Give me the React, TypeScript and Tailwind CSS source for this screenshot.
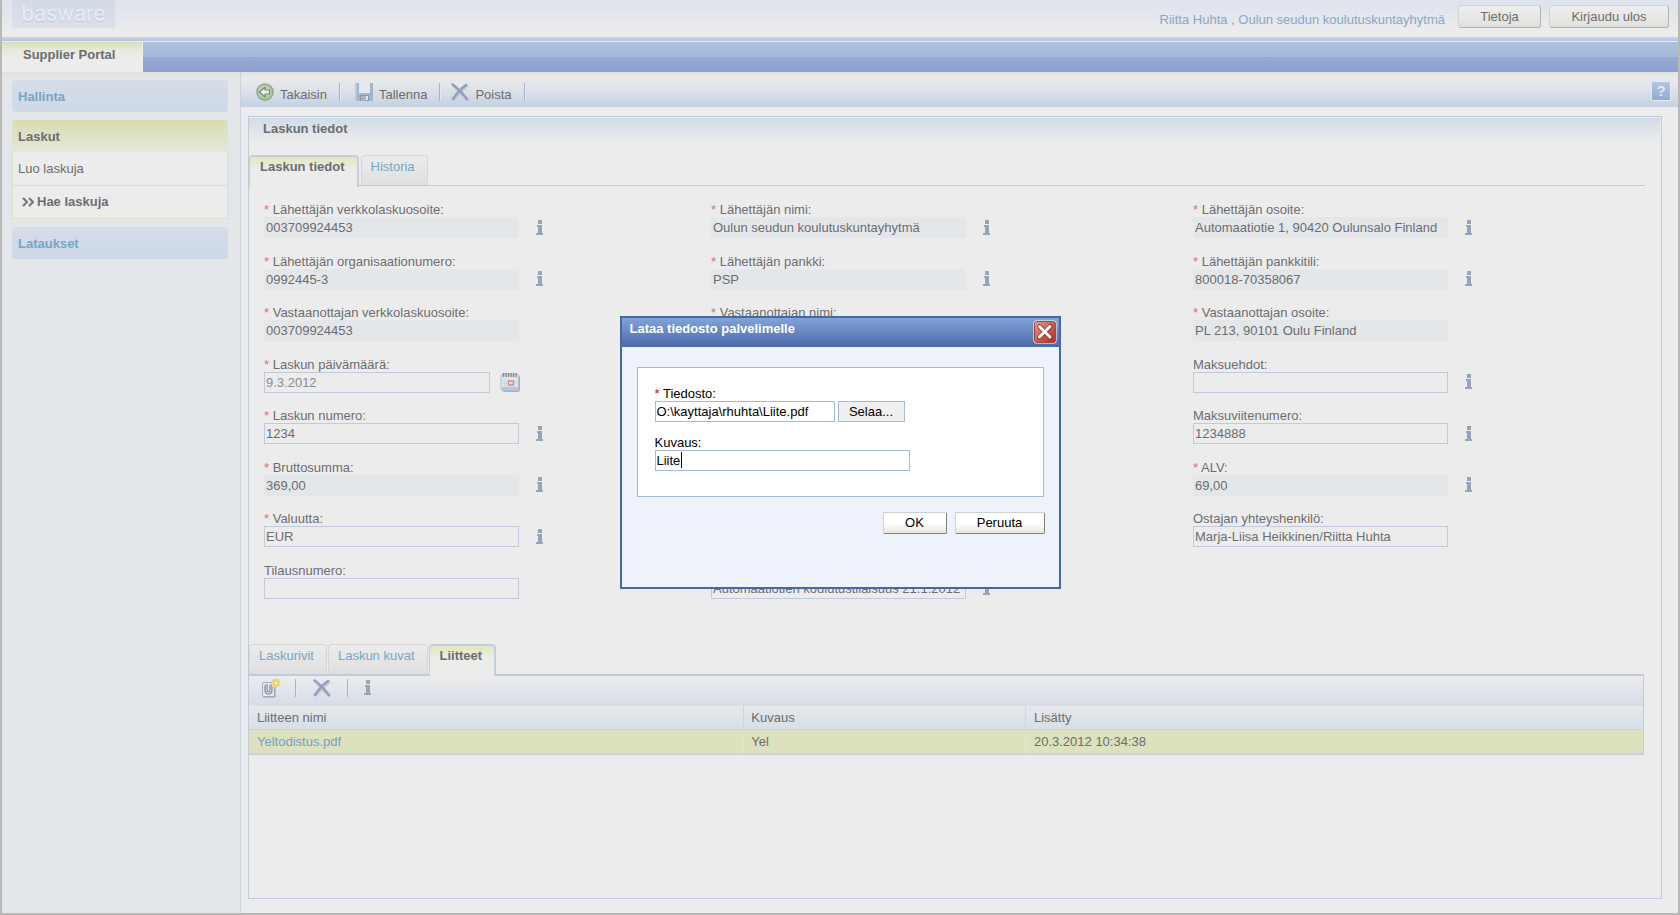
import { useState } from "react"
import { clsx } from "clsx"

interface Field {
  id: string
  label: string
  value: string
  required?: boolean
  readOnly?: boolean
  info?: boolean
  date?: boolean
  cell: string
}

const FIELDS: Field[] = [
  { id: "senderAddress", label: "Lähettäjän verkkolaskuosoite:", value: "003709924453", required: true, readOnly: true, info: true, cell: "col-start-1 row-start-1" },
  { id: "senderOrg", label: "Lähettäjän organisaationumero:", value: "0992445-3", required: true, readOnly: true, info: true, cell: "col-start-1 row-start-2" },
  { id: "receiverAddress", label: "Vastaanottajan verkkolaskuosoite:", value: "003709924453", required: true, readOnly: true, cell: "col-start-1 row-start-3" },
  { id: "invoiceDate", label: "Laskun päivämäärä:", value: "9.3.2012", required: true, date: true, cell: "col-start-1 row-start-4" },
  { id: "invoiceNumber", label: "Laskun numero:", value: "1234", required: true, info: true, cell: "col-start-1 row-start-5" },
  { id: "gross", label: "Bruttosumma:", value: "369,00", required: true, readOnly: true, info: true, cell: "col-start-1 row-start-6" },
  { id: "currency", label: "Valuutta:", value: "EUR", required: true, info: true, cell: "col-start-1 row-start-7" },
  { id: "orderNumber", label: "Tilausnumero:", value: "", cell: "col-start-1 row-start-8" },
  { id: "senderName", label: "Lähettäjän nimi:", value: "Oulun seudun koulutuskuntayhytmä", required: true, readOnly: true, info: true, cell: "col-start-2 row-start-1" },
  { id: "senderBank", label: "Lähettäjän pankki:", value: "PSP", required: true, readOnly: true, info: true, cell: "col-start-2 row-start-2" },
  { id: "receiverName", label: "Vastaanottajan nimi:", value: "", required: true, readOnly: true, cell: "col-start-2 row-start-3" },
  { id: "description", label: "", value: "Automaatiotien koulutustilaisuus 21.1.2012", info: true, cell: "col-start-2 row-start-8" },
  { id: "senderPostal", label: "Lähettäjän osoite:", value: "Automaatiotie 1, 90420 Oulunsalo Finland", required: true, readOnly: true, info: true, cell: "col-start-3 row-start-1" },
  { id: "senderAccount", label: "Lähettäjän pankkitili:", value: "800018-70358067", required: true, readOnly: true, info: true, cell: "col-start-3 row-start-2" },
  { id: "receiverPostal", label: "Vastaanottajan osoite:", value: "PL 213, 90101 Oulu Finland", required: true, readOnly: true, cell: "col-start-3 row-start-3" },
  { id: "terms", label: "Maksuehdot:", value: "", info: true, cell: "col-start-3 row-start-4" },
  { id: "reference", label: "Maksuviitenumero:", value: "1234888", info: true, cell: "col-start-3 row-start-5" },
  { id: "vat", label: "ALV:", value: "69,00", required: true, readOnly: true, info: true, cell: "col-start-3 row-start-6" },
  { id: "contact", label: "Ostajan yhteyshenkilö:", value: "Marja-Liisa Heikkinen/Riitta Huhta", cell: "col-start-3 row-start-7" },
]

function InfoIcon() {
  return (
    <svg width="8" height="16" viewBox="0 0 8 16" fill="#97a3bb">
      <path d="M2 0h4v4H2zM1 5h5v8h1v2H0v-2h2V7H1z" />
      <path d="M2 5h4v9H2z" />
    </svg>
  )
}

function DeleteIcon() {
  return (
    <svg width="18" height="18" viewBox="0 0 18 18" fill="none" strokeLinecap="round">
      <path d="M3 3l13 14M16 3L3 16" stroke="#c5cad6" strokeWidth="3" />
      <path d="M1.500 1.500Q8 6 16 16M15 2Q8 7 2 16" stroke="#959fba" strokeWidth="2.600" />
    </svg>
  )
}

function BackIcon() {
  return (
    <svg width="18" height="18" viewBox="0 0 18 18">
      <circle cx="9" cy="9" r="8" fill="#aecb9c" stroke="#93a68e" strokeWidth="1.500" />
      <circle cx="8" cy="8" r="5.500" fill="#bdd6ae" />
      <path d="M3.500 9L9 4v3h4.500v4H9v3z" fill="#eef0ee" stroke="#7f8580" strokeWidth="1.200" strokeLinejoin="round" />
    </svg>
  )
}

function SaveIcon() {
  return (
    <svg width="18" height="18" viewBox="0 0 18 18">
      <path d="M0 0h18v18H2l-2-2z" fill="#9fb6cf" />
      <path d="M0 0h2v16H0z" fill="#bccadb" />
      <path d="M4 0h11v10H4z" fill="#e4e9ee" />
      <path d="M5 12h9v6H5z" fill="#8a98a6" />
      <path d="M6 13h5v5H6z" fill="#a9b3bd" />
      <path d="M11 13h2v4h-2z" fill="#e3e6e9" />
    </svg>
  )
}

function AttachIcon() {
  return (
    <svg width="20" height="20" viewBox="0 0 20 20" fill="none">
      <rect x="1.500" y="4.500" width="12" height="14" rx="1.500" fill="#e5e8ec" stroke="#a4b1c4" />
      <path d="M2 19h12V8" stroke="#8fa1b8" />
      <path d="M4 7v5q0 4 3.500 4t3.500-4V6M6 6v6q0 2 1.500 2T9 12V7" stroke="#84898f" strokeWidth="1.200" />
      <path d="M11 1h8v8h-8z" fill="#ecdf9d" />
      <path d="M15 0v10M10 5h10M12 2l6 6M18 2l-6 6" stroke="#e6cf70" strokeWidth="1.200" />
      <path d="M14 4h2v2h-2z" fill="#f6f0cc" />
    </svg>
  )
}

function CalendarIcon() {
  return (
    <svg width="20" height="20" viewBox="0 0 20 20" fill="none">
      <rect x="2" y="3" width="18" height="17" rx="3" fill="#a9aeb9" />
      <rect x="1" y="2" width="17.500" height="16.500" rx="2" fill="#dfe4ec" stroke="#b0bed8" />
      <path d="M2 15h16v3H2z" fill="#b7c7e0" />
      <path d="M3.500 1v4M6 1v4M8.500 1v4M11 1v4M13.500 1v4M16 1v4" stroke="#85878b" strokeWidth="1.400" />
      <path d="M5 7v8M2 11h15" stroke="#cdd5e2" />
      <rect x="8.500" y="9" width="5" height="4" fill="#e8dada" stroke="#d08f8f" strokeWidth="1.500" />
    </svg>
  )
}

function CloseIcon() {
  return (
    <svg width="24" height="24" viewBox="0 0 24 24">
      <defs>
        <linearGradient id="close" x1="0" y1="0" x2="1" y2="1">
          <stop offset="0" stopColor="#e0a09a" />
          <stop offset="0.5" stopColor="#c9605a" />
          <stop offset="1" stopColor="#b3261c" />
        </linearGradient>
      </defs>
      <rect x="0.500" y="0.500" width="23" height="23" rx="3" fill="#fff" />
      <rect x="1.500" y="1.500" width="21" height="21" rx="2" fill="url(#close)" stroke="#a8433e" />
      <path d="M6.500 6.500l11 11M17.500 6.500l-11 11" stroke="#8e2f2a" strokeWidth="4.500" strokeLinecap="round" />
      <path d="M6.500 6.500l10.500 10.500M17 6.500l-10.500 10.500" stroke="#fff" strokeWidth="3" strokeLinecap="round" />
    </svg>
  )
}

function Separator() {
  return <span className="block h-[18px] w-0.5 border-l border-[#9fb3d6] bg-[#e4e9f0]" />
}

function FormField({ field }: { field: Field }) {
  const [value, setValue] = useState(field.value)
  return (
    <div className={field.cell}>
      <label htmlFor={field.id} className="block h-[15px] leading-4">
        {field.required && <span className="text-[#dd6f6f]">* </span>}
        {field.label}
      </label>
      <div className="flex h-[21px] items-center">
        <input
          id={field.id}
          aria-label={field.label || field.id}
          value={value}
          readOnly={field.readOnly}
          onChange={(e) => setValue(e.target.value)}
          className={clsx(
            "h-[21px] border px-px focus:outline-none",
            field.date ? "w-[226px] text-[#8c8c8c]" : "w-[255px]",
            field.readOnly ? "border-[#e3e7ea] bg-[#e3e7ea]" : "border-[#c0c9de] bg-transparent"
          )}
        />
        {field.info && (
          <button type="button" aria-label="Info" className="ml-[17px]">
            <InfoIcon />
          </button>
        )}
        {field.date && (
          <button type="button" aria-label="Kalenteri" className="ml-2.5">
            <CalendarIcon />
          </button>
        )}
      </div>
    </div>
  )
}

function Tab({ label, active }: { label: string; active?: boolean }) {
  return (
    <button
      type="button"
      className={clsx(
        "flex items-start rounded-t-[4px] border border-b-0 leading-4",
        active
          ? "-mb-0.5 h-8 border-t-2 border-r-2 border-[#c5cde0] bg-linear-to-b from-[#e3e6bd] via-[#ececea] via-40% to-[#ececec] pt-0.5 pr-3 pl-2.5 font-bold"
          : "mr-px h-[30px] border-[#d6d6d6] bg-linear-to-b from-[#ececec] to-[#dfdfdf] pt-[3px] pr-3 pl-[9px] text-[#77a5c4]"
      )}
    >
      {label}
    </button>
  )
}

function ToolButton({ icon, label }: { icon: React.ReactNode; label: string }) {
  return (
    <button type="button" className="flex items-center gap-1.5">
      {icon}
      <span className="pt-1.5 leading-4">{label}</span>
    </button>
  )
}

function Sidebar() {
  return (
    <nav className="w-[238px] shrink-0 bg-linear-to-b from-[#e0e0e0] to-[#e3e7ea] to-[8px] pt-2 pr-3 pl-2.5">
      <a href="#hallinta" className="flex h-8 items-center rounded-[4px] bg-linear-to-b from-[#d6dde9] to-[#ced8e8] px-1.5 pt-px font-bold text-[#77a5c4]">
        Hallinta
      </a>
      <a href="#laskut" className="mt-2 flex h-8 items-center rounded-t-[4px] bg-linear-to-b from-[#d8dcb4] to-[#e5e7d8] px-1.5 pt-px font-bold">
        Laskut
      </a>
      <ul className="border-x border-[#dde1c0] bg-[#ececec]">
        <li className="border-b border-[#dde1c0]">
          <a href="#luo" className="flex h-[33px] items-center px-[5px]">Luo laskuja</a>
        </li>
        <li className="border-b border-[#dde1c0]">
          <a href="#hae" className="flex h-8 items-center gap-[3px] px-[9px] font-bold">
            <svg width="12" height="10" viewBox="0 0 12 10" fill="none" stroke="#76767a" strokeWidth="2">
              <path d="M1 1l4 4-4 4M7 1l4 4-4 4" />
            </svg>
            Hae laskuja
          </a>
        </li>
      </ul>
      <a href="#lataukset" className="mt-2 flex h-8 items-center rounded-[4px] bg-linear-to-b from-[#d6dde9] to-[#ced8e8] px-1.5 pt-px font-bold text-[#77a5c4]">
        Lataukset
      </a>
    </nav>
  )
}

function Attachments() {
  return (
    <section className="mr-[17px]">
      <div className="flex items-end border-b-2 border-[#c0c9de]">
        <Tab label="Laskurivit" />
        <Tab label="Laskun kuvat" />
        <Tab label="Liitteet" active />
      </div>
      <div className="border-r border-b border-[#c0c9de]">
        <div className="flex h-[30px] items-center bg-linear-to-b from-[#ececec] to-[#d5dde8] px-3 pb-1.5">
          <button type="button" aria-label="Lisää liite"><AttachIcon /></button>
          <span className="ml-3.5"><Separator /></span>
          <button type="button" aria-label="Poista liite" className="mx-4"><DeleteIcon /></button>
          <Separator />
          <button type="button" aria-label="Info" className="ml-[15px]"><InfoIcon /></button>
        </div>
        <table className="w-full table-fixed border-t border-[#ececec] text-left">
          <thead>
            <tr className="h-[23px] border-b border-[#c9d2e2] bg-linear-to-b from-[#e5e7ea] to-[#d8dee8]">
              <th className="w-[35.5%] border-r border-[#cdd5e2] px-2 font-normal">Liitteen nimi</th>
              <th className="w-[20.2%] border-r border-[#cdd5e2] px-[7px] font-normal">Kuvaus</th>
              <th className="px-2 font-normal">Lisätty</th>
            </tr>
          </thead>
          <tbody>
            <tr className="h-6 border-b border-[#cdd5de] bg-[#dde1bd]">
              <td className="border-r border-[#e2e5cf] px-2">
                <a href="#yeltodistus" className="text-[#73a0d0]">Yeltodistus.pdf</a>
              </td>
              <td className="border-r border-[#e2e5cf] px-[7px]">Yel</td>
              <td className="px-2">20.3.2012 10:34:38</td>
            </tr>
          </tbody>
        </table>
      </div>
    </section>
  )
}

function UploadDialog() {
  const [file, setFile] = useState("O:\\kayttaja\\rhuhta\\Liite.pdf")
  const [description, setDescription] = useState("Liite")
  const [focused, setFocused] = useState(false)

  const button =
    "h-[22px] rounded-[2px] border border-t-[#d0d0d0] border-r-[#808080] border-b-[#808080] border-l-[#d0d0d0] bg-linear-to-b from-white from-50% to-[#e6e6da]"

  return (
    <div className="fixed inset-0 flex items-start justify-center pt-[316px]">
      <div role="dialog" aria-labelledby="dialog-title" className="w-[441px] border-2 border-[#4668a8] bg-[#eef3fb] pb-[53px] text-black">
        <div className="flex h-[29px] items-start justify-between bg-linear-to-b from-[#83a3d6] to-[#4a6aaa] pr-0.5 pl-2">
          <h2 id="dialog-title" className="pt-[3px] font-bold leading-4 text-white">Lataa tiedosto palvelimelle</h2>
          <button type="button" aria-label="Sulje" className="pt-0.5"><CloseIcon /></button>
        </div>
        <form className="mx-[15px] mt-5" onSubmit={(e) => e.preventDefault()}>
          <div className="h-[130px] border border-[#a5b8de] bg-white px-[17px] pt-[18px]">
            <label htmlFor="file" className="block h-[15px] leading-4">
              <span className="text-[#dd0000]">* </span>
              Tiedosto:
            </label>
            <div className="flex gap-[3px]">
              <input
                id="file"
                value={file}
                onChange={(e) => setFile(e.target.value)}
                className="h-[21px] w-[180px] border border-[#a5b8de] px-px focus:outline-none"
              />
              <button type="button" className="h-[21px] w-[67px] border border-[#a5b8de] bg-[#efefef]">Selaa...</button>
            </div>
            <label htmlFor="kuvaus" className="mt-[13px] block h-[15px] leading-4">Kuvaus:</label>
            <div className="relative w-[255px]">
              <input
                id="kuvaus"
                value={description}
                onFocus={() => setFocused(true)}
                onChange={(e) => setDescription(e.target.value)}
                className="block h-[21px] w-full border border-[#a5b8de] px-px focus:outline-none"
              />
              {!focused && <span className="absolute top-0.5 left-[26px] h-4 w-px bg-black" />}
            </div>
          </div>
          <div className="-mr-px mt-[15px] flex justify-end gap-2">
            <button type="submit" className={clsx(button, "w-16")}>OK</button>
            <button type="button" className={clsx(button, "w-[90px]")}>Peruuta</button>
          </div>
        </form>
      </div>
    </div>
  )
}

export default function App() {
  const headerButton =
    "h-[23px] rounded-[3px] border border-t-[#d4d4d4] border-r-[#b0b0b0] border-b-[#b0b0b0] border-l-[#d4d4d4] bg-linear-to-b from-[#eeeeee] to-[#e1e1dc]"

  return (
    <div className="flex min-h-screen flex-col border-x-2 border-b-2 border-[#b8b8b8] bg-[#ececec] font-['Liberation_Sans',Arial,sans-serif] text-[13px] text-[#6c6c70]">
      <header>
        <div className="flex h-[37px] items-start justify-between bg-linear-to-b from-[#dde2ec] to-[#ececec] to-85% pr-[9px] pl-2.5">
          <div className="flex h-7 w-[103px] items-center justify-center rounded-b-[3px] bg-linear-to-b from-[#d3dae6] to-[#dbe0ea] font-['Inter',sans-serif] text-[21px] text-[#e9ecf1] [text-shadow:0_1px_1px_#b9c4d8]">
            basware
          </div>
          <div className="flex items-center pt-[5px]">
            <span className="mr-[13px] pt-[7px] leading-4 text-[#8aa5c8]">Riitta Huhta , Oulun seudun koulutuskuntayhytmä</span>
            <button type="button" className={clsx(headerButton, "mr-2 w-[83px]")}>Tietoja</button>
            <button type="button" className={clsx(headerButton, "w-[120px]")}>Kirjaudu ulos</button>
          </div>
        </div>
        <div className="h-[5px] border-b border-[#e8ecf4] bg-linear-to-b from-[#ced6e4] to-[#b3c2e2]" />
        <nav className="flex h-[30px] bg-[linear-gradient(#adc1de,#a6b9da_50%,#94a9d3_50%,#8ca2cd)]">
          <a href="#portal" className="border-r border-[#f0f0f0] bg-linear-to-b from-[#dadfb2] via-[#e9eadf] via-30% to-[#ececec] to-60% pt-[5px] pr-[27px] pl-[21px] font-bold leading-4">
            Supplier Portal
          </a>
        </nav>
      </header>

      <div className="flex flex-1">
        <Sidebar />
        <main className="flex min-w-0 flex-1 flex-col border-l border-[#c9d3e2]">
          <div className="flex h-[35px] items-center bg-[linear-gradient(#e0e0e0,#e8e9ea_5px,#e3e6ea_40%,#c4d1e0)] pt-1 pr-[7px] pl-[15px]">
            <ToolButton icon={<BackIcon />} label="Takaisin" />
            <span className="mr-3.5 ml-3"><Separator /></span>
            <ToolButton icon={<SaveIcon />} label="Tallenna" />
            <span className="mr-2.5 ml-3"><Separator /></span>
            <ToolButton icon={<DeleteIcon />} label="Poista" />
            <span className="ml-3"><Separator /></span>
            <button
              type="button"
              aria-label="Ohje"
              className="mb-0.5 ml-auto h-5 w-5 rounded-[2px] border border-[#e6e9ef] bg-linear-to-b from-[#b4c5e0] to-[#8faad4] text-[15px] font-bold leading-4 text-[#e3e9f2]"
            >
              ?
            </button>
          </div>

          <div className="mt-[9px] mr-4 mb-3.5 ml-[7px] flex flex-1 flex-col border border-[#c0c9de]">
            <h1 className="mt-px mr-px flex h-[23px] items-center bg-linear-to-b from-[#d1dbe7] to-[#ececec] pb-0.5 pl-3.5 font-bold">Laskun tiedot</h1>
            <div className="mt-3.5 mr-4 flex items-end border-b border-[#c0c9de]">
              <Tab label="Laskun tiedot" active />
              <span className="ml-0.5"><Tab label="Historia" /></span>
            </div>
            <form className="mt-4 mr-4 grid h-[412px] grid-cols-[447fr_482fr_452fr] grid-rows-8 pl-[15px]" onSubmit={(e) => e.preventDefault()}>
              {FIELDS.map((field) => (
                <FormField key={field.id} field={field} />
              ))}
            </form>
            <div className="mt-[30px]">
              <Attachments />
            </div>
          </div>
        </main>
      </div>

      <UploadDialog />
    </div>
  )
}
